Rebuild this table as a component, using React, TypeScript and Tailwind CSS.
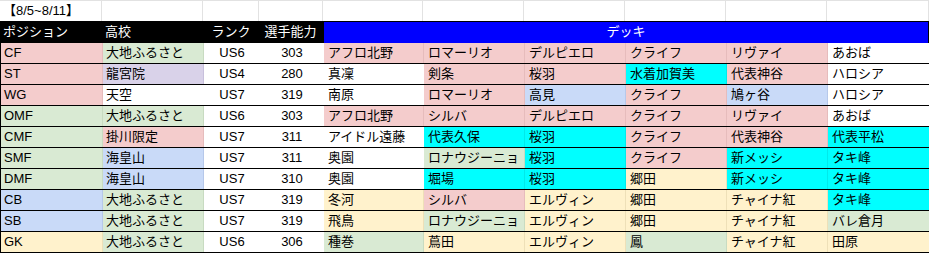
import React from "react";

type C = "p" | "g" | "l" | "b" | "c" | "y" | "w";

const bg: Record<C, string> = {
  p: "bg-[#f4cccc] border-r-[#e6bcbc]",
  g: "bg-[#d9ead3] border-r-[#c8dbc1]",
  l: "bg-[#d9d2e9] border-r-[#c8c0dc]",
  b: "bg-[#c9daf8] border-r-[#b6c8ea]",
  c: "bg-[#00ffff] border-r-[#00eaea]",
  y: "bg-[#fff2cc] border-r-[#eee0b8]",
  w: "bg-white border-r-white",
};

type Row = {
  pos: [string, C];
  school: [string, C];
  rank: string;
  power: string;
  deck: [string, C][];
};

const rows: Row[] = [
  { pos: ["CF", "p"], school: ["大地ふるさと", "g"], rank: "US6", power: "303", deck: [["アフロ北野", "p"], ["ロマーリオ", "p"], ["デルピエロ", "p"], ["クライフ", "p"], ["リヴァイ", "p"], ["あおば", "w"]] },
  { pos: ["ST", "p"], school: ["龍宮院", "l"], rank: "US4", power: "280", deck: [["真凜", "w"], ["剣条", "p"], ["桜羽", "p"], ["水着加賀美", "c"], ["代表神谷", "p"], ["ハロシア", "w"]] },
  { pos: ["WG", "p"], school: ["天空", "w"], rank: "US7", power: "319", deck: [["南原", "w"], ["ロマーリオ", "p"], ["高見", "b"], ["クライフ", "p"], ["鳩ヶ谷", "b"], ["ハロシア", "w"]] },
  { pos: ["OMF", "g"], school: ["大地ふるさと", "g"], rank: "US6", power: "303", deck: [["アフロ北野", "p"], ["シルバ", "p"], ["デルピエロ", "p"], ["クライフ", "p"], ["リヴァイ", "p"], ["あおば", "w"]] },
  { pos: ["CMF", "g"], school: ["掛川限定", "p"], rank: "US7", power: "311", deck: [["アイドル遠藤", "w"], ["代表久保", "c"], ["桜羽", "c"], ["クライフ", "p"], ["代表神谷", "p"], ["代表平松", "c"]] },
  { pos: ["SMF", "g"], school: ["海皇山", "b"], rank: "US7", power: "311", deck: [["奥園", "w"], ["ロナウジーニョ", "g"], ["桜羽", "c"], ["クライフ", "p"], ["新メッシ", "c"], ["タキ峰", "c"]] },
  { pos: ["DMF", "g"], school: ["海皇山", "b"], rank: "US7", power: "310", deck: [["奥園", "w"], ["堀場", "c"], ["桜羽", "c"], ["郷田", "y"], ["新メッシ", "c"], ["タキ峰", "c"]] },
  { pos: ["CB", "b"], school: ["大地ふるさと", "g"], rank: "US7", power: "319", deck: [["冬河", "y"], ["シルバ", "p"], ["エルヴィン", "y"], ["郷田", "y"], ["チャイナ紅", "y"], ["タキ峰", "c"]] },
  { pos: ["SB", "b"], school: ["大地ふるさと", "g"], rank: "US7", power: "319", deck: [["飛鳥", "y"], ["ロナウジーニョ", "g"], ["エルヴィン", "y"], ["郷田", "y"], ["チャイナ紅", "y"], ["バレ倉月", "g"]] },
  { pos: ["GK", "y"], school: ["大地ふるさと", "g"], rank: "US6", power: "306", deck: [["種巻", "g"], ["蔦田", "y"], ["エルヴィン", "y"], ["鳳", "g"], ["チャイナ紅", "y"], ["田原", "y"]] },
];

const cols = "grid grid-cols-[102px_101px_56px_64px_100px_101px_101px_101px_101px_102px]";
const font = { fontFamily: '"Liberation Sans", Arial, "Noto Sans CJK JP", sans-serif' };

export default function App() {
  return (
    <div className="w-[929px] h-[253px] bg-white text-[13px] text-black overflow-hidden" style={font}>
      {/* title row */}
      <div className={`${cols} h-[21px] border-t border-t-[#e2e2e2]`}>
        <div className="pl-[3px] leading-[19px] whitespace-nowrap border-r border-r-[#e2e2e2]">【8/5~8/11】</div>
        {Array.from({ length: 9 }).map((_, i) => (
          <div key={i} className="border-r border-r-[#e2e2e2]" />
        ))}
      </div>
      {/* header row */}
      <div className="grid grid-cols-[323px_606px] h-[22px] border-t border-t-black">
        <div className="grid grid-cols-[102px_101px_56px_64px] bg-black text-white leading-[20px]">
          <div className="pl-[3px] whitespace-nowrap">ポジション</div>
          <div className="pl-[3px] whitespace-nowrap">高校</div>
          <div className="text-center whitespace-nowrap">ランク</div>
          <div className="text-center whitespace-nowrap pr-[1px]">選手能力</div>
        </div>
        <div className="bg-[#0000ff] text-white text-center leading-[20px] border-l border-l-black border-r border-r-black">
          デッキ
        </div>
      </div>
      {/* data rows */}
      {rows.map((r, i) => (
        <div key={i} className={`${cols} h-[21px] border-b border-b-black border-l border-l-black border-r border-r-black leading-[20px] whitespace-nowrap`}>
          <div className={`pl-[3px] border-r ${bg[r.pos[1]]}`}>{r.pos[0]}</div>
          <div className={`pl-[3px] border-r ${bg[r.school[1]]}`}>{r.school[0]}</div>
          <div className="text-center bg-white">{r.rank}</div>
          <div className="text-center bg-white">{r.power}</div>
          {r.deck.map(([n, c], j) => (
            <div key={j} className={`pl-[4px] overflow-hidden ${j < 5 ? "border-r" : ""} ${bg[c]}`}>{n}</div>
          ))}
        </div>
      ))}
    </div>
  );
}
